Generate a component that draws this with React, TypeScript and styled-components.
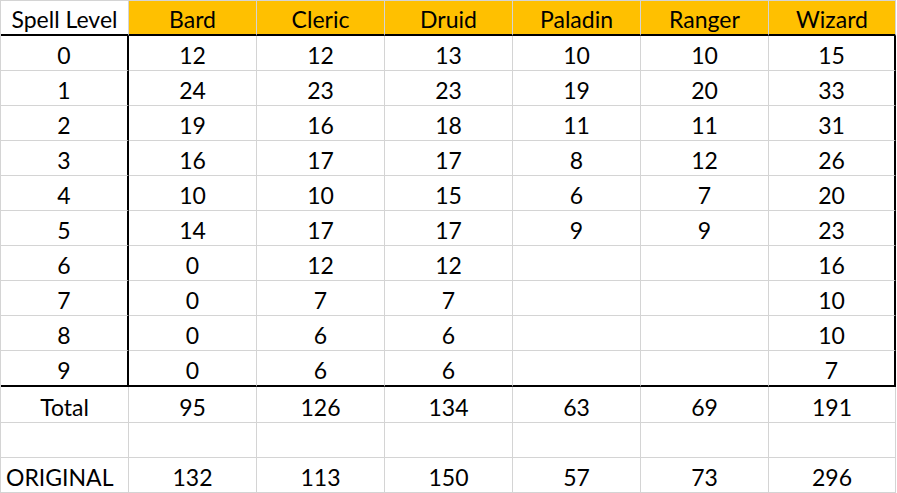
import React from "react";
import styled, { createGlobalStyle, css } from "styled-components";

const GlobalStyle = createGlobalStyle`
  html, body {
    margin: 0;
    padding: 0;
    background: #ffffff;
  }
  body {
    font-family: Lato, "Open Sans", "Liberation Sans", sans-serif;
    color: #000000;
  }
`;

const GRID = "#d4d4d4";
const COLS = "128px repeat(5, 128px) 127px";

const Sheet = styled.div`
  display: flex;
  flex-direction: column;
  width: max-content;
  border-top: 1px solid ${GRID};
  border-left: 1px solid ${GRID};
`;

const Row = styled.div<{ $h: number }>`
  display: grid;
  grid-template-columns: ${COLS};
  height: ${(p) => p.$h}px;
`;

type CellProps = {
  $head?: boolean;
  $thickBottom?: boolean;
  $thickRight?: boolean;
  $left?: boolean;
};

const Cell = styled.div<CellProps>`
  box-sizing: border-box;
  display: flex;
  align-items: flex-end;
  justify-content: ${(p) => (p.$left ? "flex-start" : "center")};
  padding: 0 0 3px ${(p) => (p.$left ? "5px" : "0")};
  font-size: 23px;
  line-height: 23px;
  white-space: nowrap;
  overflow: hidden;
  background: ${(p) => (p.$head ? "#ffc000" : "#ffffff")};
  border-right: 1px solid ${GRID};
  border-bottom: 1px solid ${GRID};
  ${(p) =>
    p.$thickBottom &&
    css`
      border-bottom: 2px solid #000000;
    `}
  ${(p) =>
    p.$thickRight &&
    css`
      border-right: 2px solid #000000;
    `}
`;

const classes = ["Bard", "Cleric", "Druid", "Paladin", "Ranger", "Wizard"];

const levels: (number | null)[][] = [
  [12, 12, 13, 10, 10, 15],
  [24, 23, 23, 19, 20, 33],
  [19, 16, 18, 11, 11, 31],
  [16, 17, 17, 8, 12, 26],
  [10, 10, 15, 6, 7, 20],
  [14, 17, 17, 9, 9, 23],
  [0, 12, 12, null, null, 16],
  [0, 7, 7, null, null, 10],
  [0, 6, 6, null, null, 10],
  [0, 6, 6, null, null, 7],
];

const totals = [95, 126, 134, 63, 69, 191];
const original = [132, 113, 150, 57, 73, 296];

export default function App() {
  return (
    <>
      <GlobalStyle />
      <Sheet>
        <Row $h={35}>
          <Cell $thickBottom>Spell Level</Cell>
          {classes.map((c) => (
            <Cell key={c} $head $thickBottom>
              {c}
            </Cell>
          ))}
        </Row>
        {levels.map((vals, i) => {
          const last = i === levels.length - 1;
          return (
            <Row key={i} $h={last ? 36 : 35}>
              <Cell $thickRight $thickBottom={last}>
                {i}
              </Cell>
              {vals.map((v, j) => (
                <Cell
                  key={j}
                  $thickBottom={last}
                  $thickRight={j === vals.length - 1}
                >
                  {v ?? ""}
                </Cell>
              ))}
            </Row>
          );
        })}
        <Row $h={36}>
          <Cell>Total</Cell>
          {totals.map((v, j) => (
            <Cell key={j}>{v}</Cell>
          ))}
        </Row>
        <Row $h={35}>
          <Cell />
          {totals.map((_, j) => (
            <Cell key={j} />
          ))}
        </Row>
        <Row $h={35}>
          <Cell $left>ORIGINAL</Cell>
          {original.map((v, j) => (
            <Cell key={j}>{v}</Cell>
          ))}
        </Row>
      </Sheet>
    </>
  );
}
